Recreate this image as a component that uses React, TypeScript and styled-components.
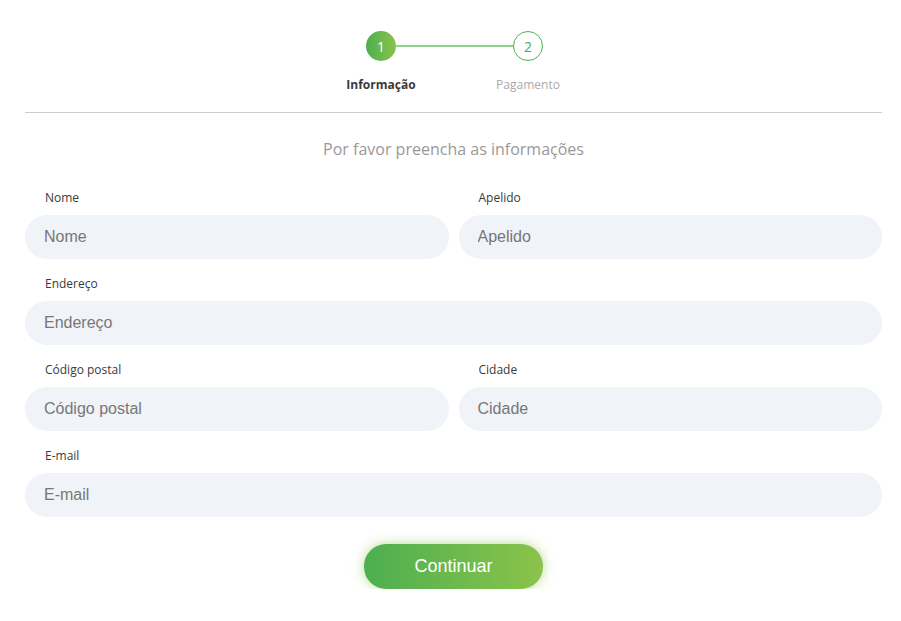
import React from "react";
import styled, { createGlobalStyle } from "styled-components";

const GlobalStyle = createGlobalStyle`
  html, body {
    margin: 0;
    padding: 0;
    background: #ffffff;
  }
  * {
    box-sizing: border-box;
  }
`;

const Page = styled.div`
  width: 857px;
  margin-left: 25px;
  padding-top: 31px;
  display: flex;
  flex-direction: column;
  align-items: center;
`;

const Stepper = styled.div`
  display: flex;
  align-items: flex-start;
  justify-content: center;
  padding-left: 2px;
`;

const Step = styled.div`
  width: 100px;
  display: flex;
  flex-direction: column;
  align-items: center;
`;

const Circle = styled.div<{ $active?: boolean }>`
  width: 30px;
  height: 30px;
  border-radius: 50%;
  display: flex;
  align-items: center;
  justify-content: center;
  font-family: "Open Sans", sans-serif;
  font-size: 14px;
  color: ${(p) => (p.$active ? "#ffffff" : "#4caf50")};
  background: ${(p) =>
    p.$active ? "linear-gradient(90deg, #4caf50, #8bc34a)" : "#ffffff"};
  border: ${(p) => (p.$active ? "none" : "1px solid #4caf50")};
`;

const StepLabel = styled.div<{ $active?: boolean }>`
  margin-top: 15px;
  font-family: "Open Sans", sans-serif;
  font-size: 12px;
  font-weight: ${(p) => (p.$active ? 700 : 400)};
  color: ${(p) => (p.$active ? "#3a3a3a" : "#aaaaaa")};
  white-space: nowrap;
`;

const Connector = styled.div`
  flex: none;
  width: 117px;
  height: 2px;
  margin: 14px -35px 0;
  background: #8fd18f;
`;

const Divider = styled.hr`
  width: 100%;
  border: none;
  border-top: 1px solid #cccccc;
  margin: 19px 0 0;
`;

const Subtitle = styled.div`
  margin-top: 25px;
  font-family: "Open Sans", sans-serif;
  font-size: 16px;
  color: #999999;
`;

const Form = styled.form`
  width: 100%;
  margin-top: 29px;
  display: flex;
  flex-direction: column;
`;

const Row = styled.div`
  display: flex;
  gap: 10px;
  margin-bottom: 16px;
`;

const Field = styled.div`
  flex: 1;
  display: flex;
  flex-direction: column;
`;

const Label = styled.label`
  font-family: "Open Sans", sans-serif;
  font-size: 12px;
  color: #3a3a3a;
  padding-left: 20px;
  height: 18px;
  line-height: 18px;
  margin-bottom: 8px;
`;

const Input = styled.input`
  width: 100%;
  height: 44px;
  border: none;
  border-radius: 22px;
  background: #f0f3f8;
  padding: 0 19px;
  font-family: "Liberation Sans", Arial, sans-serif;
  font-size: 16px;
  color: #333;
  outline: none;
  &::placeholder {
    color: #777777;
  }
`;

const ButtonRow = styled.div`
  display: flex;
  justify-content: center;
  margin-top: 11px;
`;

const Button = styled.button`
  width: 179px;
  height: 45px;
  border: none;
  border-radius: 22px;
  background: linear-gradient(90deg, #4caf50, #8bc34a);
  color: #ffffff;
  font-family: "Liberation Sans", Arial, sans-serif;
  font-size: 18px;
  cursor: pointer;
  box-shadow: 0 0 12px rgba(139, 195, 74, 0.6);
`;

const fields: { label: string }[][] = [
  [{ label: "Nome" }, { label: "Apelido" }],
  [{ label: "Endereço" }],
  [{ label: "Código postal" }, { label: "Cidade" }],
  [{ label: "E-mail" }],
];

const App = () => {
  return (
    <>
      <GlobalStyle />
      <Page>
        <Stepper>
          <Step>
            <Circle $active>1</Circle>
            <StepLabel $active>Informação</StepLabel>
          </Step>
          <Connector />
          <Step>
            <Circle>2</Circle>
            <StepLabel>Pagamento</StepLabel>
          </Step>
        </Stepper>
        <Divider />
        <Subtitle>Por favor preencha as informações</Subtitle>
        <Form onSubmit={(e) => e.preventDefault()}>
          {fields.map((row, i) => (
            <Row key={i}>
              {row.map((f) => (
                <Field key={f.label}>
                  <Label>{f.label}</Label>
                  <Input placeholder={f.label} />
                </Field>
              ))}
            </Row>
          ))}
          <ButtonRow>
            <Button type="submit">Continuar</Button>
          </ButtonRow>
        </Form>
      </Page>
    </>
  );
};

export default App;
